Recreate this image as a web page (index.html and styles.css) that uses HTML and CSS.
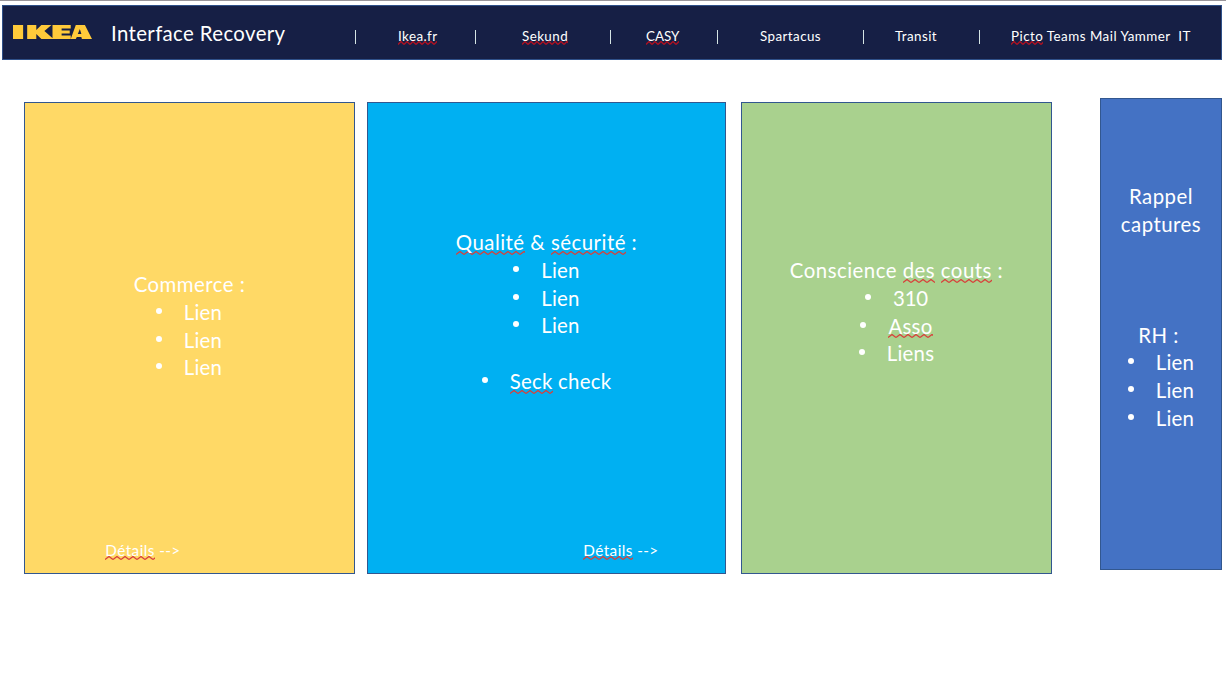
FILE: index.html
```html
<!DOCTYPE html>
<html lang="fr">
<head>
<meta charset="utf-8">
<title>Interface Recovery</title>
<link rel="stylesheet" href="styles.css">
</head>
<body>
<header class="bar">
  <svg class="logo" viewBox="0 0 78 14" preserveAspectRatio="none" role="img" aria-label="IKEA">
    <path d="M0 0H10V14H0ZM14 0H23V5L28 0H38L31 6L40 14H28L23 9V14H14ZM39 0H57V3.500H48V5.500H56V8.500H48V10.500H57V14H39ZM62 0H71L78 14H68L67.500 12H63L62 14H57ZM66 4L64 9H67.500Z"/>
  </svg>
  <h1 class="title">Interface Recovery</h1>
  <nav class="nav">
    <i class="sep sep-1"></i>
    <a class="link link-1"><span class="sp sm">Ikea.fr</span></a>
    <i class="sep sep-2"></i>
    <a class="link link-2"><span class="sp sm">Sekund</span></a>
    <i class="sep sep-3"></i>
    <a class="link link-3"><span class="sp sm">CASY</span></a>
    <i class="sep sep-4"></i>
    <a class="link link-4">Spartacus</a>
    <i class="sep sep-5"></i>
    <a class="link link-5">Transit</a>
    <i class="sep sep-6"></i>
    <a class="link link-6"><span class="sp sm">Picto</span> Teams Mail Yammer&nbsp; IT</a>
  </nav>
</header>
<main class="board">
  <section class="card commerce">
    <h2>Commerce :</h2>
    <ul><li>Lien</li><li>Lien</li><li>Lien</li></ul>
    <a class="details"><span class="sp">Détails</span> --&gt;</a>
  </section>
  <section class="card quality">
    <h2><span class="sp">Qualité</span> &amp; <span class="sp">sécurité</span> :</h2>
    <ul><li>Lien</li><li>Lien</li><li>Lien</li><li class="spaced"><span class="sp">Seck</span> check</li></ul>
    <a class="details"><span class="sp">Détails</span> --&gt;</a>
  </section>
  <section class="card costs">
    <h2>Conscience <span class="sp">des</span> <span class="sp">couts</span> :</h2>
    <ul><li class="number">310</li><li><span class="sp">Asso</span></li><li>Liens</li></ul>
  </section>
  <aside class="card side">
    <h2>Rappel captures</h2>
    <h2 class="rh">RH :</h2>
    <ul><li>Lien</li><li>Lien</li><li>Lien</li></ul>
  </aside>
</main>
</body>
</html>
```
FILE: styles.css
```css
* { box-sizing: border-box; }
body {
  margin: 0;
  height: 686px;
  overflow: hidden;
  background: #fff;
  border-top: 1px solid #99959a;
  color: #fff;
  font: 20.4px/27.75px Lato, Carlito, sans-serif;
}
.bar {
  display: flex;
  width: 1220px;
  height: 55px;
  margin: 4px 0 0 2px;
  padding-left: 10px;
  background: #161f45;
  border: 1px solid #2f5089;
}
.logo { width: 79px; height: 14px; margin-top: 19px; fill: #ffca3a; }
.title { margin: 14px 0 0 19px; width: 244px; font-size: 20.4px; font-weight: 400; letter-spacing: .38px; white-space: nowrap; }
.nav { display: flex; font-size: 13.4px; line-height: 20px; letter-spacing: .42px; padding-top: 20px; }
.link { white-space: nowrap; flex: none; }
.sep { width: 1px; height: 14px; margin-top: 4px; background: #d5e4e4; flex: none; }
.link-1 { width: 77px; margin-left: 42px; }
.link-2 { width: 88px; margin-left: 46px; }
.link-3 { width: 71px; margin-left: 35px; letter-spacing: 0; }
.link-4 { width: 103px; margin-left: 42px; }
.link-5 { width: 84px; margin-left: 31px; }
.link-6 { margin-left: 31px; letter-spacing: .47px; }

.board { display: flex; margin: 38px 0 0 24px; }
.card {
  display: flex;
  flex-direction: column;
  align-items: center;
  flex: none;
  height: 472px;
  margin-top: 4px;
  border: 1px solid #32578f;
}
.card h2 { margin: 0; font: inherit; letter-spacing: .48px; white-space: nowrap; }
.card ul { margin: 0; padding: 0; list-style: none; display: flex; flex-direction: column; align-items: center; }
.card li { display: flex; white-space: pre; letter-spacing: .25px; }
.card .number { letter-spacing: -.2px; }
.card li::before { content: ""; width: 6px; height: 6px; margin: 9px 22px 0 0; border-radius: 50%; background: #fff; }
.commerce { width: 331px; background: #ffd966; padding-top: 168px; }
.commerce ul { padding-right: 1px; }
.quality { width: 359px; margin-left: 12px; background: #00b0f2; padding-top: 126px; }
.costs { width: 311px; margin-left: 15px; background: #a9d18e; padding-top: 154px; }
.side { width: 122px; margin: 0 0 0 48px; background: #4472c4; padding-top: 84px; }
.side h2 { width: 90px; text-align: center; white-space: normal; }
.side .rh { margin-top: 83px; padding-right: 5px; }
.card .spaced { margin-top: 27.75px; }
.details { margin: auto 0 10px; font-size: 15.3px; line-height: 26px; letter-spacing: .42px; }
.commerce .details { padding-right: 93px; }
.quality .details { padding-left: 149px; }

.sp {
  display: inline-block;
  background: url("data:image/svg+xml,%3Csvg xmlns='http://www.w3.org/2000/svg' width='8' height='4'%3E%3Cpath d='M0 3.500L4 .5L8 3.500' fill='none' stroke='%23d8403a' stroke-width='1.300'/%3E%3C/svg%3E") 0 calc(100% - 2px) repeat-x;
}
.sm { background-image: url("data:image/svg+xml,%3Csvg xmlns='http://www.w3.org/2000/svg' width='6' height='4'%3E%3Cpath d='M0 3.500L3 .5L6 3.500' fill='none' stroke='%23b01020' stroke-width='1.300'/%3E%3C/svg%3E"); background-position: 0 calc(100% - 1px); }
.details .sp { background-position: 0 calc(100% - 3px); }
```
